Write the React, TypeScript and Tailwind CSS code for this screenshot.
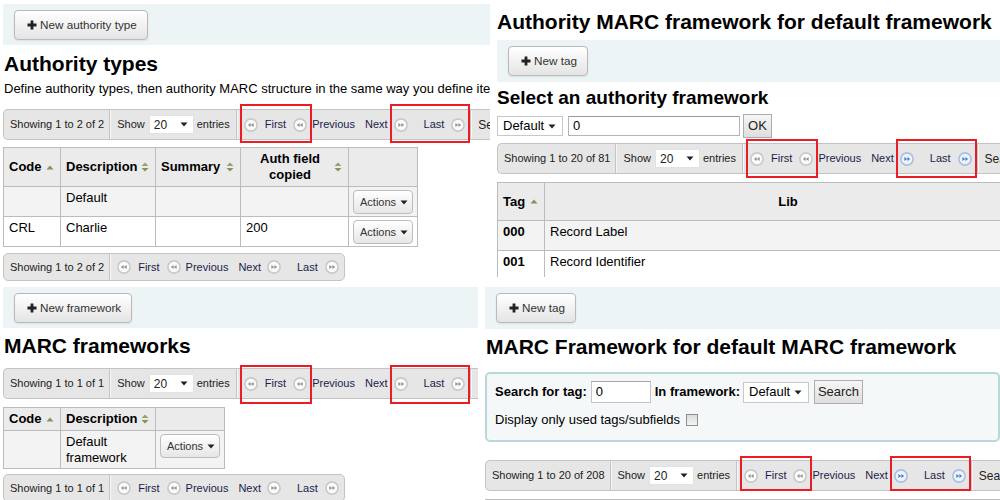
import type { ReactNode } from 'react'

const FONT = "font-['Liberation_Sans',Arial,Helvetica,sans-serif]"

function PlusIcon() {
  return (
    <svg width="10" height="10" viewBox="0 0 10 10" className="shrink-0">
      <path d="M3.6 0.5h2.8v3.1h3.1v2.8H6.4v3.1H3.6V6.4H0.5V3.6h3.1z" fill="#222" />
    </svg>
  )
}

function Caret({ className = '' }: { className?: string }) {
  return (
    <svg width="8" height="5" viewBox="0 0 8 5" className={`shrink-0 ${className}`}>
      <path d="M0.5 0.5h7L4 4.5z" fill="#222" />
    </svg>
  )
}

function PageIcon({ dir, blue = false }: { dir: 'left' | 'right'; blue?: boolean }) {
  const tri = blue ? '#3d79cf' : '#8e8e8e'
  return (
    <svg width="14" height="14" viewBox="0 0 14 14" className="shrink-0">
      <circle cx="7" cy="7" r="6.1" fill={blue ? '#eef3fb' : '#fbfbfb'} stroke={blue ? '#a9c0e2' : '#c9c9c9'} strokeWidth="1.6" />
      {dir === 'left' ? (
        <path d="M3.9 7L6.6 4.9V9.1Z M6.9 7L9.6 4.9V9.1Z" fill={tri} />
      ) : (
        <path d="M10.1 7L7.4 4.9V9.1Z M7.1 7L4.4 4.9V9.1Z" fill={tri} />
      )}
    </svg>
  )
}

function SortIcon({ both = false }: { both?: boolean }) {
  if (!both) {
    return (
      <svg width="8" height="5" viewBox="0 0 8 5" className="shrink-0">
        <path d="M0.5 4.5L4 0.5L7.5 4.5Z" fill="#8d8d5e" />
      </svg>
    )
  }
  return (
    <svg width="8" height="10" viewBox="0 0 8 10" className="shrink-0">
      <path d="M0.5 4L4 0.5L7.5 4Z" fill="#9aa06a" />
      <path d="M0.5 6L4 9.5L7.5 6Z" fill="#8d8d5e" />
    </svg>
  )
}

function ToolbarButton({ label }: { label: string }) {
  return (
    <div className="flex items-center h-[30px] pl-[12px] pr-[10px] rounded-[4px] border border-[#b9b9b9] bg-linear-to-b from-white to-[#e4e4e4] text-[11.7px] text-[#333] shadow-[0_1px_2px_rgba(0,0,0,0.08)]">
      <PlusIcon />
      <span className="ml-[3px]">{label}</span>
    </div>
  )
}

function Toolbar({ label, tall = false }: { label: string; tall?: boolean }) {
  return (
    <div className={`flex items-center ${tall ? 'h-[42px]' : 'h-[41px]'} px-[11px] bg-[#edf4f6]`}>
      <ToolbarButton label={label} />
    </div>
  )
}

function ActionsButton() {
  return (
    <div className="flex items-center h-[24px] w-[60px] pl-[6px] rounded-[4px] border border-[#bdbdbd] bg-linear-to-b from-white to-[#e6e6e6] text-[11px] text-[#333]">
      Actions
      <Caret className="ml-[4px]" />
    </div>
  )
}

interface PagerProps {
  info: string
  show?: boolean
  blue?: boolean
  search?: boolean
  round?: boolean
  box?: string
}

function Pager({ info, show = true, blue = false, search = false, round = false, box }: PagerProps) {
  const divider = 'border-r border-[#c4c4c4] shadow-[1px_0_0_#f6f6f6]'
  const redBox = `absolute -left-[4px] -right-[5px] border-2 border-[#ec1c24] pointer-events-none ${box ?? ''}`
  return (
    <div
      className={`flex items-stretch w-max whitespace-nowrap ${show ? 'h-[31px]' : 'h-[28px]'} bg-[#e6e6e6] border border-[#c4c4c4] text-[11px] text-[#222] ${
        round ? 'rounded-[5px]' : 'rounded-l-[5px] border-r-0'
      }`}
    >
      <div className={`shrink-0 flex items-center pl-[6px] pr-[5px] ${divider}`}>{info}</div>
      {show && (
        <div className={`shrink-0 flex items-center pl-[7px] pr-[6px] ${divider}`}>
          Show
          <div className="ml-[4px] flex items-center justify-between w-[45px] h-[19px] pl-[4px] pr-[5px] bg-white border border-[#e2e2e2] text-[12px]">
            20
            <Caret />
          </div>
          <span className="ml-[3px]">entries</span>
        </div>
      )}
      <div className={`shrink-0 flex items-stretch pl-[7px] pr-[5px] text-[#1d1d4b] ${search ? divider : ''}`}>
        <span className="relative flex items-center">
          <PageIcon dir="left" />
          <span className="ml-[7px]">First</span>
          <span className="ml-[7px] flex">
            <PageIcon dir="left" />
          </span>
          {box && <span className={redBox} />}
        </span>
        <span className="ml-[5px] flex items-center">Previous</span>
        <span className="ml-[10px] flex items-center">Next</span>
        <span className="relative ml-[6px] flex items-center">
          <PageIcon dir="right" blue={blue} />
          <span className="ml-[16px]">Last</span>
          <span className="ml-[7px] flex">
            <PageIcon dir="right" blue={blue} />
          </span>
          {box && <span className={redBox} />}
        </span>
      </div>
      {search && (
        <div className="shrink-0 flex items-center pl-[7px] pr-[40px] text-[12px]">
          Search:
          <div className="ml-[4px] w-[120px] h-[19px] bg-white border border-[#bbb]" />
        </div>
      )}
    </div>
  )
}

function Th({ children, w, sort, both, center, h }: { children: ReactNode; w: string; sort?: boolean; both?: boolean; center?: boolean; h?: string }) {
  return (
    <th className={`${w} ${h ?? ''} border border-[#bcbcbc] bg-[#ebebeb] py-[3px] pl-[5px] pr-[6px] font-bold text-[13px] leading-[16px] text-black align-middle`}>
      <div className="flex items-center justify-between">
        <span className={center ? 'flex-1 text-center' : 'text-left'}>{children}</span>
        {sort && <SortIcon both={both} />}
      </div>
    </th>
  )
}

function Td({ children, odd, bold, h }: { children?: ReactNode; odd?: boolean; bold?: boolean; h?: string }) {
  return (
    <td
      className={`border border-[#bcbcbc] ${odd ? 'bg-[#f3f3f3]' : 'bg-white'} ${bold ? 'font-bold' : ''} ${h ?? ''} align-top pt-[3px] pb-[2px] px-[5px] text-[13px] leading-[16px]`}
    >
      {children}
    </td>
  )
}

function ActionTd({ odd }: { odd?: boolean }) {
  return (
    <td className={`border border-[#bcbcbc] ${odd ? 'bg-[#f3f3f3]' : 'bg-white'} align-top pt-[3px] pb-[2px] px-[4px]`}>
      <ActionsButton />
    </td>
  )
}

function AuthorityTypes() {
  return (
    <div className="w-[490px] shrink-0 overflow-hidden pl-[3px]">
      <div className="mt-[4px]">
        <Toolbar label="New authority type" />
      </div>
      <h1 className="mt-[7px] pl-[1px] text-[21px] leading-[24px] font-bold">Authority types</h1>
      <p className="mt-[5px] pl-[1px] text-[13px] leading-[16px] whitespace-nowrap">
        Define authority types, then authority MARC structure in the same way you define itemtypes and bibliographic MARC tag structure.
      </p>
      <div className="mt-[12px]">
        <Pager info="Showing 1 to 2 of 2" search box="-top-[6px] -bottom-[4px]" />
      </div>
      <table className="mt-[7px] table-fixed border-collapse w-[414px]">
        <thead>
          <tr>
            <Th w="w-[57px]" sort>Code</Th>
            <Th w="w-[95px]" sort both>Description</Th>
            <Th w="w-[85px]" sort both>Summary</Th>
            <Th w="w-[108px]" sort both center>
              Auth field copied
            </Th>
            <th className="w-[69px] border border-[#bcbcbc] bg-[#ebebeb]" />
          </tr>
        </thead>
        <tbody>
          <tr>
            <Td odd />
            <Td odd>Default</Td>
            <Td odd />
            <Td odd />
            <ActionTd odd />
          </tr>
          <tr>
            <Td>CRL</Td>
            <Td>Charlie</Td>
            <Td />
            <Td>200</Td>
            <ActionTd />
          </tr>
        </tbody>
      </table>
      <div className="mt-[6px]">
        <Pager info="Showing 1 to 2 of 2" show={false} round />
      </div>
    </div>
  )
}

function AuthorityFramework() {
  return (
    <div className="flex-1 min-w-0 overflow-hidden ml-[7px] h-[277px]">
      <h1 className="pt-[10px] text-[21px] leading-[24px] font-bold whitespace-nowrap">Authority MARC framework for default framework</h1>
      <div className="mt-[6px]">
        <Toolbar label="New tag" tall />
      </div>
      <h3 className="mt-[5px] text-[19px] leading-[22px] font-bold whitespace-nowrap">Select an authority framework</h3>
      <div className="mt-[5px] flex items-center h-[24px]">
        <div className="flex items-center justify-between w-[66px] h-[20px] pl-[5px] pr-[6px] bg-white border border-[#c8c8c8] text-[13px]">
          Default
          <Caret />
        </div>
        <div className="ml-[5px] w-[172px] h-[20px] pl-[4px] bg-white border border-[#b5b5b5] border-t-[#9a9a9a] text-[13px] leading-[18px]">0</div>
        <div className="ml-[3px] flex items-center justify-center w-[29px] h-[24px] border border-[#adadad] bg-linear-to-b from-[#f6f6f6] to-[#dedede] text-[13px] text-[#222]">
          OK
        </div>
      </div>
      <div className="mt-[5px]">
        <Pager info="Showing 1 to 20 of 81" blue search box="-top-[5px] -bottom-[5px]" />
      </div>
      <table className="mt-[8px] table-fixed border-collapse w-[535px]">
        <thead>
          <tr>
            <Th w="w-[47px]" h="h-[38px]" sort>Tag</Th>
            <Th w="w-[488px]" h="h-[38px]" center>Lib</Th>
          </tr>
        </thead>
        <tbody>
          <tr>
            <Td odd bold h="h-[30px]">000</Td>
            <Td odd h="h-[30px]">Record Label</Td>
          </tr>
          <tr>
            <Td bold h="h-[30px]">001</Td>
            <Td h="h-[30px]">Record Identifier</Td>
          </tr>
        </tbody>
      </table>
    </div>
  )
}

function MarcFrameworks() {
  return (
    <div className="w-[478px] shrink-0 overflow-hidden pl-[3px]">
      <div className="mt-[4px]">
        <Toolbar label="New framework" />
      </div>
      <h1 className="mt-[6px] pl-[1px] text-[21px] leading-[24px] font-bold">MARC frameworks</h1>
      <div className="mt-[10px]">
        <Pager info="Showing 1 to 1 of 1" search box="-top-[4px] -bottom-[6px]" />
      </div>
      <table className="mt-[8px] table-fixed border-collapse w-[221px]">
        <thead>
          <tr>
            <Th w="w-[57px]" sort>Code</Th>
            <Th w="w-[95px]" sort both>Description</Th>
            <th className="w-[69px] border border-[#bcbcbc] bg-[#ebebeb]" />
          </tr>
        </thead>
        <tbody>
          <tr>
            <Td odd />
            <Td odd>Default framework</Td>
            <ActionTd odd />
          </tr>
        </tbody>
      </table>
      <div className="mt-[5px]">
        <Pager info="Showing 1 to 1 of 1" show={false} round />
      </div>
    </div>
  )
}

function MarcFramework() {
  return (
    <div className="flex-1 min-w-0 overflow-hidden ml-[7px]">
      <div className="mt-[4px]">
        <Toolbar label="New tag" tall />
      </div>
      <h1 className="mt-[6px] pl-[1px] text-[21px] leading-[24px] font-bold whitespace-nowrap">MARC Framework for default MARC framework</h1>
      <div className="mt-[13px] h-[70px] border-2 border-[#b9d8d9] rounded-[5px] bg-[#f4f8f9] pl-[8px] pt-[6px] text-[13px]">
        <div className="flex items-center h-[24px]">
          <span className="font-bold">Search for tag:</span>
          <div className="ml-[4px] w-[60px] h-[22px] pl-[4px] bg-white border border-[#c4c4c4] border-t-[#a5a5a5] leading-[20px]">0</div>
          <span className="ml-[4px] font-bold">In framework:</span>
          <div className="ml-[3px] flex items-center justify-between w-[66px] h-[21px] pl-[5px] pr-[6px] bg-white border border-[#c8c8c8]">
            Default
            <Caret />
          </div>
          <div className="ml-[5px] flex items-center justify-center w-[49px] h-[24px] border border-[#adadad] bg-linear-to-b from-[#f6f6f6] to-[#dedede] text-[#222]">
            Search
          </div>
        </div>
        <div className="mt-[8px] flex items-center h-[16px]">
          <span>Display only used tags/subfields</span>
          <span className="ml-[6px] w-[12px] h-[12px] border border-[#8f8f8f] bg-linear-to-b from-[#dcdcdc] to-[#f4f4f4]" />
        </div>
      </div>
      <div className="mt-[18px]">
        <Pager info="Showing 1 to 20 of 208" blue search box="-top-[5px] -bottom-[1px]" />
      </div>
      <div className="mt-[8px] border-t border-[#bcbcbc]" />
    </div>
  )
}

export default function App() {
  return (
    <div className={`w-[1000px] h-[500px] overflow-hidden bg-white text-black ${FONT}`}>
      <div className="flex h-[283px]">
        <AuthorityTypes />
        <AuthorityFramework />
      </div>
      <div className="flex h-[217px]">
        <MarcFrameworks />
        <MarcFramework />
      </div>
    </div>
  )
}
